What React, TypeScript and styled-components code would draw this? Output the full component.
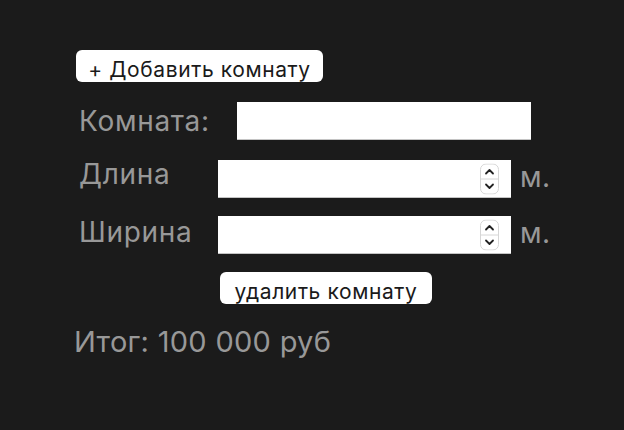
import styled, { createGlobalStyle } from 'styled-components'

const GlobalStyle = createGlobalStyle`
  html, body {
    margin: 0;
    padding: 0;
    background: #1b1b1b;
  }
  body {
    font-family: Inter, "Liberation Sans", sans-serif;
    min-height: 430px;
  }
`

const Page = styled.div`
  display: flex;
  flex-direction: column;
  align-items: flex-start;
  padding: 50px 0 0 74px;
`

const Button = styled.button<{ $indent: number; $width: number; $top?: number }>`
  box-sizing: border-box;
  margin: ${(p) => p.$top ?? 0}px 0 0 ${(p) => p.$indent}px;
  width: ${(p) => p.$width}px;
  height: 32px;
  padding: 7px 0 0 0;
  border: none;
  border-radius: 6px;
  background: #ffffff;
  color: #1a1a1a;
  font-family: Inter, "Liberation Sans", sans-serif;
  font-size: 21px;
  letter-spacing: 0.6px;
  line-height: 25px;
  text-align: center;
  overflow: visible;
  cursor: pointer;
`

const Row = styled.div<{ $top: number }>`
  display: flex;
  align-items: center;
  height: 38px;
  margin-top: ${(p) => p.$top}px;
  padding-left: 5px;
`

/* $lift raises the text above the field's centre line */
const Label = styled.span<{ $width: number; $lift?: number }>`
  align-self: flex-start;
  width: ${(p) => p.$width}px;
  color: #989898;
  font-size: 28px;
  letter-spacing: 0.7px;
  line-height: ${(p) => 38 - (p.$lift ?? 0) * 2}px;
`

const TextInput = styled.input<{ $width: number }>`
  box-sizing: border-box;
  width: ${(p) => p.$width}px;
  height: 38px;
  border: none;
  border-bottom: 1px solid #c4c4c4;
  background: #ffffff;
  outline: none;
  font-size: 18px;
  padding: 0 8px;
`

const NumberWrap = styled.div`
  position: relative;
  display: flex;
  align-items: center;
`

const NumberInput = styled(TextInput)`
  padding-right: 36px;
  &::-webkit-inner-spin-button,
  &::-webkit-outer-spin-button {
    -webkit-appearance: none;
    margin: 0;
  }
`

const Spinner = styled.svg`
  position: absolute;
  right: 12px;
  top: 50%;
  transform: translateY(-50%);
`

const Unit = styled.span`
  align-self: flex-start;
  margin-left: 9px;
  color: #989898;
  font-size: 28px;
  letter-spacing: 0.5px;
  line-height: 34px;
`

const Total = styled.div`
  margin-top: 20px;
  color: #989898;
  font-size: 29px;
  letter-spacing: 0.3px;
  line-height: 36px;
`

const Stepper = () => (
  <Spinner width="19" height="31" viewBox="0 0 19 31">
    <rect x="0.5" y="0.5" width="18" height="30" rx="5.5" fill="#fff" stroke="#d6d6d6" />
    <line x1="1" y1="15.5" x2="18" y2="15.5" stroke="#d6d6d6" />
    <path d="M6 10 L9.5 6.5 L13 10" fill="none" stroke="#222" strokeWidth="1.8" strokeLinecap="round" strokeLinejoin="round" />
    <path d="M6 21 L9.5 24.5 L13 21" fill="none" stroke="#222" strokeWidth="1.8" strokeLinecap="round" strokeLinejoin="round" />
  </Spinner>
)

const MeterField = ({ label, top, lift }: { label: string; top: number; lift: number }) => (
  <Row $top={top}>
    <Label $width={139} $lift={lift}>{label}</Label>
    <NumberWrap>
      <NumberInput type="number" $width={293} />
      <Stepper />
    </NumberWrap>
    <Unit>м.</Unit>
  </Row>
)

const App = () => {
  return (
    <>
      <GlobalStyle />
      <Page>
        <Button $indent={2} $width={247}>+ Добавить комнату</Button>
        <Row $top={20}>
          <Label $width={158}>Комната:</Label>
          <TextInput type="text" $width={294} />
        </Row>
        <MeterField label="Длина" top={20} lift={5} />
        <MeterField label="Ширина" top={18} lift={3} />
        <Button $indent={146} $width={212} $top={18}>удалить комнату</Button>
        <Total>Итог: 100 000 руб</Total>
      </Page>
    </>
  )
}

export default App
